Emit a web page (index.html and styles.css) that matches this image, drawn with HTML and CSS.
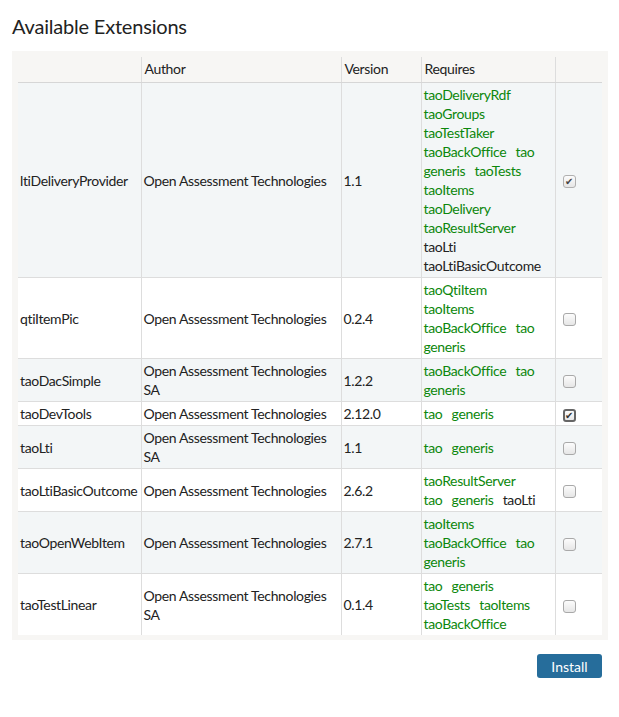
FILE: index.html
```html
<!DOCTYPE html>
<html>
<head>
<meta charset="utf-8">
<link rel="stylesheet" href="styles.css">
</head>
<body>
<h1 class="title">Available Extensions</h1>
<div class="panel">
<table class="ext">
<colgroup>
<col class="c1"><col class="c2"><col class="c3"><col class="c4"><col class="c5">
</colgroup>
<thead>
<tr><th></th><th>Author</th><th>Version</th><th>Requires</th><th></th></tr>
</thead>
<tbody>
<tr class="odd">
<td>ltiDeliveryProvider</td><td>Open Assessment Technologies</td><td>1.1</td>
<td class="req"><span class="ok">taoDeliveryRdf</span> <span class="ok">taoGroups</span> <span class="ok">taoTestTaker</span> <span class="ok">taoBackOffice</span> <span class="ok">tao</span> <span class="ok">generis</span> <span class="ok">taoTests</span> <span class="ok">taoItems</span> <span class="ok">taoDelivery</span> <span class="ok">taoResultServer</span> <span class="no">taoLti</span> <span class="no">taoLtiBasicOutcome</span></td>
<td class="cb"><span class="box checked dim">✔</span></td>
</tr>
<tr class="even">
<td>qtiItemPic</td><td>Open Assessment Technologies</td><td>0.2.4</td>
<td class="req"><span class="ok">taoQtiItem</span> <span class="ok">taoItems</span> <span class="ok">taoBackOffice</span> <span class="ok">tao</span> <span class="ok">generis</span></td>
<td class="cb"><span class="box"></span></td>
</tr>
<tr class="odd">
<td>taoDacSimple</td><td>Open Assessment Technologies SA</td><td>1.2.2</td>
<td class="req"><span class="ok">taoBackOffice</span> <span class="ok">tao</span> <span class="ok">generis</span></td>
<td class="cb"><span class="box"></span></td>
</tr>
<tr class="even">
<td>taoDevTools</td><td>Open Assessment Technologies</td><td>2.12.0</td>
<td class="req"><span class="ok">tao</span> <span class="ok">generis</span></td>
<td class="cb"><span class="box checked focus">✔</span></td>
</tr>
<tr class="odd">
<td>taoLti</td><td>Open Assessment Technologies SA</td><td>1.1</td>
<td class="req"><span class="ok">tao</span> <span class="ok">generis</span></td>
<td class="cb"><span class="box"></span></td>
</tr>
<tr class="even">
<td>taoLtiBasicOutcome</td><td>Open Assessment Technologies</td><td>2.6.2</td>
<td class="req"><span class="ok">taoResultServer</span> <span class="ok">tao</span> <span class="ok">generis</span> <span class="no">taoLti</span></td>
<td class="cb"><span class="box"></span></td>
</tr>
<tr class="odd">
<td>taoOpenWebItem</td><td>Open Assessment Technologies</td><td>2.7.1</td>
<td class="req"><span class="ok">taoItems</span> <span class="ok">taoBackOffice</span> <span class="ok">tao</span> <span class="ok">generis</span></td>
<td class="cb"><span class="box"></span></td>
</tr>
<tr class="even">
<td>taoTestLinear</td><td>Open Assessment Technologies SA</td><td>0.1.4</td>
<td class="req"><span class="ok">tao</span> <span class="ok">generis</span> <span class="ok">taoTests</span> <span class="ok">taoItems</span> <span class="ok">taoBackOffice</span></td>
<td class="cb"><span class="box"></span></td>
</tr>
</tbody>
</table>
</div>
<div class="actions"><button class="install">Install</button></div>
</body>
</html>
```
FILE: styles.css
```css
html, body {
  margin: 0;
  padding: 0;
  background: #fff;
}
body {
  font-family: "Lato", "Liberation Sans", sans-serif;
  font-size: 14px;
  letter-spacing: -0.35px;
  color: #222;
  padding: 0 11px 0 12px;
}
.title {
  font-size: 20px;
  letter-spacing: -0.2px;
  font-weight: normal;
  margin: 0;
  padding: 12px 0 0;
  line-height: 28px;
  color: #222;
}
.panel {
  margin-top: 11px;
  background: #f7f6f4;
  padding: 6px 6px 5px 6px;
}
.ext {
  border-collapse: collapse;
  width: 584px;
  table-layout: fixed;
  line-height: 19px;
}
.c1 { width: 123px; }
.c2 { width: 200px; }
.c3 { width: 80px; }
.c4 { width: 134px; }
.c5 { width: 47px; }
.ext th {
  text-align: left;
  font-weight: normal;
  padding: 2px 3px 4px;
  height: 18px;
  border-left: 1px solid #ddd;
  border-bottom: 1px solid #d6d6d6;
  background: #f7f6f4;
}
.ext td {
  padding: 2px 2px 2px 2px;
  vertical-align: middle;
  border-left: 1px solid #ddd;
  border-top: 1px solid #ddd;
}
.ext td.req {
  padding-right: 10px;
}
.ext th:first-child, .ext td:first-child {
  border-left: none;
}
.odd td { background: #f3f6f7; }
.even td { background: #fff; }
.ok { color: #0c870c; margin-right: 6px; }
.no { color: #222; margin-right: 6px; }
.cb { text-align: left; padding-left: 7px !important; }
.box {
  display: inline-block;
  box-sizing: border-box;
  width: 13px;
  height: 13px;
  border: 1px solid #a9a9a9;
  border-radius: 3px;
  background: linear-gradient(#fcfcfc, #e6e6e6);
  vertical-align: middle;
  font-size: 10px;
  line-height: 11px;
  text-align: center;
  color: #333;
  letter-spacing: 0;
}
.box.dim { color: #444; border-color: #b0b0b0; }
.box.focus { border: 2px solid #666; line-height: 9px; font-size: 10px; }
.actions {
  display: flex;
  justify-content: flex-end;
  padding: 14px 6px 0 0;
}
.install {
  font-family: "Lato", "Liberation Sans", sans-serif;
  font-size: 14px;
  color: #fff;
  background: #266d9b;
  border: none;
  border-radius: 3px;
  width: 65px;
  height: 24px;
  padding: 0;
}
```
